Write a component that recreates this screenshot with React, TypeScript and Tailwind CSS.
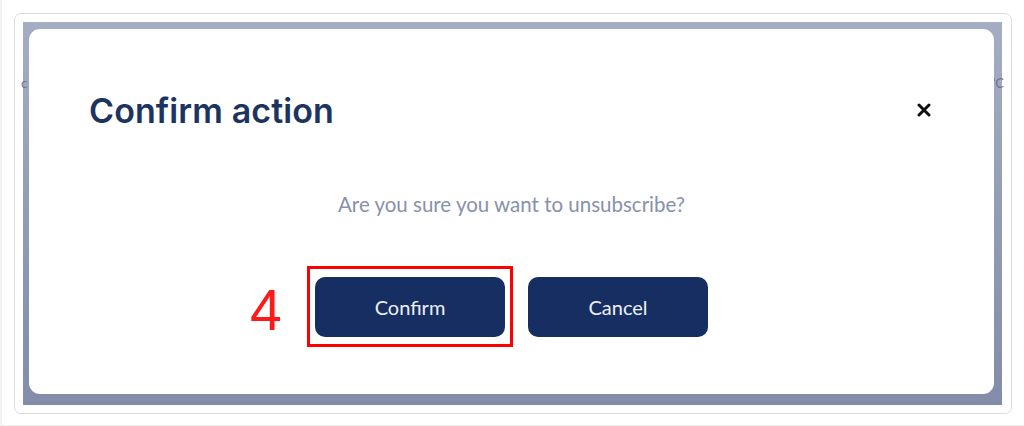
import React from "react";

export default function App() {
  return (
    <div className="w-[1024px] h-[426px] bg-white relative overflow-hidden" style={{ fontFamily: "Lato, 'Noto Sans', sans-serif" }}>
      <div className="pt-[13px] pl-[14px] w-[1012px] h-[414px]">
        <div className="w-[998px] h-[401px] border border-[#dcdcdc] rounded-[7px] bg-white pt-[8px] pl-[8px]">
          <div className="relative w-[979px] h-[383px] bg-gradient-to-b from-[#a4adc4] to-[#838ca8] pt-[7px] pl-[6px]">
            <span className="absolute left-[-2px] top-[52px] text-[13px] text-[#6b7590]">c</span>
            <span className="absolute right-[-2px] top-[52px] text-[13px] text-[#6b7590]">'C</span>
            <div className="relative w-[965px] h-[365px] bg-white rounded-[11px] flex flex-col">
              <div className="flex items-start justify-between pl-[60px] pr-[62px] pt-[63px]">
                <h1 className="text-[34px] leading-[38px] font-semibold text-[#1d3461] tracking-[0.1px]" style={{ fontFamily: "Inter, 'Liberation Sans', sans-serif" }}>
                  Confirm action
                </h1>
                <button className="mt-[10px] w-[16px] h-[16px] flex items-center justify-center">
                  <svg width="14" height="14" viewBox="0 0 14 14">
                    <path d="M2 2 L12 12 M12 2 L2 12" stroke="#111" strokeWidth="3" strokeLinecap="round" />
                  </svg>
                </button>
              </div>
              <p className="mt-[62px] text-center text-[20.5px] leading-[24px] text-[#8791ad]">
                Are you sure you want to unsubscribe?
              </p>
              <div className="mt-[61px] flex justify-center gap-[23px]">
                <div className="relative">
                  <span className="absolute left-[-65px] top-[5px] text-[57px] leading-[56px] text-[#ff1a1a]" style={{ fontFamily: "'Liberation Sans', sans-serif" }}>4</span>
                  <span className="absolute left-[-8px] right-[-8px] top-[-11px] bottom-[-10px] border-[3px] border-[#ff0000]" />
                  <button className="relative w-[190px] h-[60px] rounded-[10px] bg-[#172e62] text-[#eef0f5] text-[20px]">
                    Confirm
                  </button>
                </div>
                <button className="w-[180px] h-[60px] rounded-[10px] bg-[#172e62] text-[#eef0f5] text-[20px]">
                  Cancel
                </button>
              </div>
            </div>
          </div>
        </div>
      </div>
      <div className="absolute left-0 right-0 top-[425px] h-px bg-[#ececec]" />
      <div className="absolute left-0 top-0 bottom-0 w-[2px] bg-[#f2f2f2]" />
    </div>
  );
}
